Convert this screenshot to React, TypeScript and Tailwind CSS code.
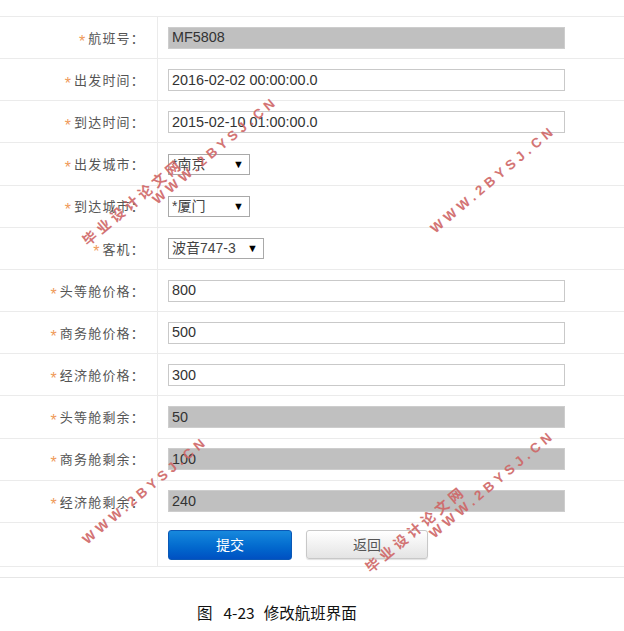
import React from "react";

type Row = {
  label: string;
  kind: "text" | "gray" | "select";
  value: string;
  selW?: string;
};

const rows: Row[] = [
  { label: "航班号：", kind: "gray", value: "MF5808" },
  { label: "出发时间：", kind: "text", value: "2016-02-02 00:00:00.0" },
  { label: "到达时间：", kind: "text", value: "2015-02-10 01:00:00.0" },
  { label: "出发城市：", kind: "select", value: "*南京", selW: "w-[82px]" },
  { label: "到达城市：", kind: "select", value: "*厦门", selW: "w-[82px]" },
  { label: "客机：", kind: "select", value: "波音747-3", selW: "w-[96px]" },
  { label: "头等舱价格：", kind: "text", value: "800" },
  { label: "商务舱价格：", kind: "text", value: "500" },
  { label: "经济舱价格：", kind: "text", value: "300" },
  { label: "头等舱剩余：", kind: "gray", value: "50" },
  { label: "商务舱剩余：", kind: "gray", value: "100" },
  { label: "经济舱剩余：", kind: "gray", value: "240" },
];

const cjk = "font-['Noto_Sans_CJK_SC','Noto_Sans',sans-serif]";
const latin = "font-['Liberation_Sans','Noto_Sans_CJK_SC',sans-serif]";

function Field({ row }: { row: Row }) {
  if (row.kind === "select") {
    return (
      <div
        className={`${row.selW} h-[21px] border border-[#a9a9a9] bg-white flex items-center justify-between pl-[3px] pr-[5px] text-[14px] text-[#444] ${latin}`}
      >
        <span className="leading-none">{row.value}</span>
        <span className="text-[11px] leading-none text-black">▼</span>
      </div>
    );
  }
  const gray = row.kind === "gray";
  return (
    <div
      className={`w-[397px] h-[22px] border flex items-center px-[3px] text-[14.4px] text-[#333] ${latin} ${
        gray ? "bg-[#c0c0c0] border-[#cdcdcd]" : "bg-white border-[#c9c9c9]"
      }`}
    >
      <span className="leading-none">{row.value}</span>
    </div>
  );
}

function Watermark({
  text,
  pos,
  cjkText,
}: {
  text: string;
  pos: string;
  cjkText?: boolean;
}) {
  return (
    <div
      className={`absolute ${pos} -translate-x-1/2 -translate-y-1/2 -rotate-[40deg] whitespace-nowrap font-bold text-[#cf6666] opacity-90 pointer-events-none ${
        cjkText
          ? `${cjk} text-[14px] tracking-[4px] pl-[4px]`
          : `${latin} text-[13.5px] tracking-[4.3px] pl-[4.3px]`
      }`}
    >
      {text}
    </div>
  );
}

export default function App() {
  return (
    <div className="relative w-[624px] h-[631px] bg-white overflow-hidden">
      <div className="pt-[16px]">
        <div className="border-t border-[#ebebeb]">
          {rows.map((r) => (
            <div
              key={r.label}
              className="flex h-[42.17px] border-b border-[#ebebeb]"
            >
              <div
                className={`w-[158px] shrink-0 border-r border-[#ebebeb] flex items-center justify-end pr-[12px] text-[13px] tracking-[1.2px] text-[#555] ${cjk}`}
              >
                <span
                  className={`text-[#ef9a5a] text-[16px] mr-[3px] relative top-[4px] tracking-normal ${latin}`}
                >
                  *
                </span>
                <span>{r.label}</span>
              </div>
              <div className="flex-1 flex items-center pl-[10px]">
                <Field row={r} />
              </div>
            </div>
          ))}
          <div className="flex h-[44px] border-b border-[#ebebeb]">
            <div className="w-[158px] shrink-0 border-r border-[#ebebeb]" />
            <div className="flex-1 flex items-center pl-[10px] pt-[1px]">
              <div
                className={`w-[124px] h-[30px] rounded-[3px] bg-linear-to-b from-[#1789dd] to-[#0050c2] border border-[#0b58b6] flex items-center justify-center text-white text-[14px] ${cjk}`}
              >
                提交
              </div>
              <div
                className={`ml-[14px] w-[122px] h-[29px] rounded-[3px] bg-linear-to-b from-white to-[#e4e4e4] border border-[#c8c8c8] shadow-[0_1px_1px_rgba(0,0,0,0.12)] flex items-center justify-center text-[#555] text-[14px] ${cjk}`}
              >
                返回
              </div>
            </div>
          </div>
        </div>
        <div className="mt-[10px] border-t border-[#e6e6e6]" />
        <div
          className={`mt-[24px] pl-[197px] flex items-center text-[15.5px] leading-[20px] text-[#111] ${cjk}`}
        >
          <span>图</span>
          <span className="ml-[11px]">4-23</span>
          <span className="ml-[9px]">修改航班界面</span>
        </div>
      </div>

      <Watermark text="WWW.2BYSJ.CN" pos="left-[214px] top-[152px]" />
      <Watermark text="毕业设计论文网" pos="left-[131px] top-[203px]" cjkText />
      <Watermark text="WWW.2BYSJ.CN" pos="left-[492px] top-[181px]" />
      <Watermark text="WWW.2BYSJ.CN" pos="left-[144px] top-[492px]" />
      <Watermark text="WWW.2BYSJ.CN" pos="left-[491px] top-[486px]" />
      <Watermark text="毕业设计论文网" pos="left-[414px] top-[530px]" cjkText />
    </div>
  );
}
